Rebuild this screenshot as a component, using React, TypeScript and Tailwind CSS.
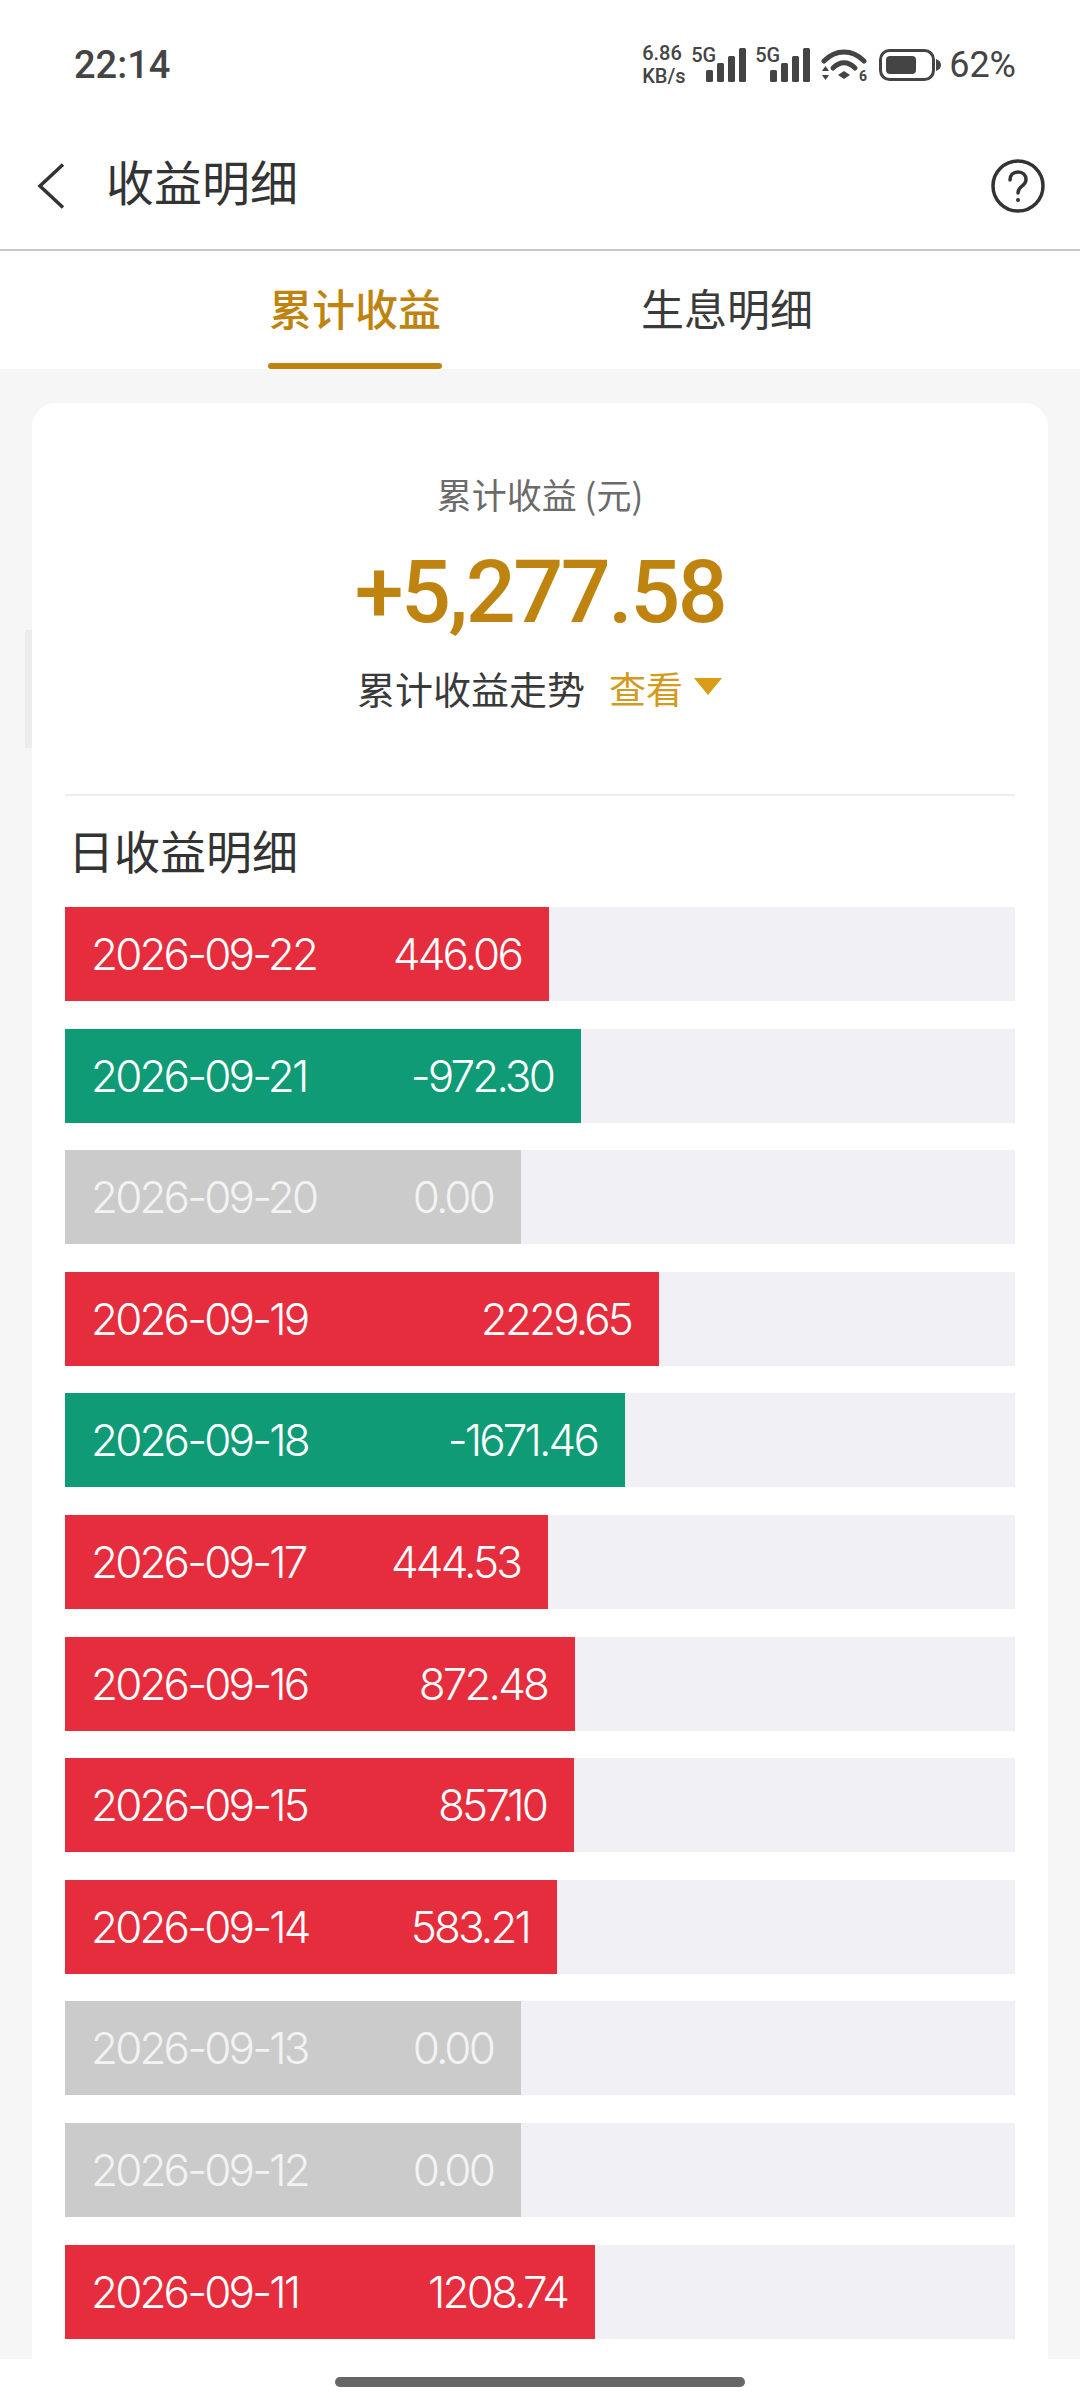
import React from 'react';

const CJK = "font-['Noto_Sans_CJK_SC','Noto_Sans',sans-serif]";

type Row = { date: string; value: string; width: number; color: string; muted?: boolean };

const RED = 'bg-[#e62d3d]';
const GREEN = 'bg-[#0e9b75]';
const GRAY = 'bg-[#cbcbcb]';

const rows: Row[] = [
  { date: '2026-09-22', value: '446.06', width: 484, color: RED },
  { date: '2026-09-21', value: '-972.30', width: 516, color: GREEN },
  { date: '2026-09-20', value: '0.00', width: 456, color: GRAY, muted: true },
  { date: '2026-09-19', value: '2229.65', width: 594, color: RED },
  { date: '2026-09-18', value: '-1671.46', width: 560, color: GREEN },
  { date: '2026-09-17', value: '444.53', width: 483, color: RED },
  { date: '2026-09-16', value: '872.48', width: 510, color: RED },
  { date: '2026-09-15', value: '857.10', width: 509, color: RED },
  { date: '2026-09-14', value: '583.21', width: 492, color: RED },
  { date: '2026-09-13', value: '0.00', width: 456, color: GRAY, muted: true },
  { date: '2026-09-12', value: '0.00', width: 456, color: GRAY, muted: true },
  { date: '2026-09-11', value: '1208.74', width: 530, color: RED },
];

const Signal = () => (
  <svg width="40" height="34" viewBox="0 0 40 34" fill="#444">
    <rect x="0" y="22" width="7" height="12" rx="1.5" />
    <rect x="11" y="15" width="7" height="19" rx="1.5" />
    <rect x="22" y="8" width="7" height="26" rx="1.5" />
    <rect x="33" y="0" width="7" height="34" rx="1.5" />
  </svg>
);

const Wifi = () => (
  <svg width="46" height="34" viewBox="0 0 46 34" fill="none">
    <path d="M3 13C15 1 31 1 43 13" stroke="#444" strokeWidth="5" strokeLinecap="round" />
    <path d="M12 20C19 13 27 13 34 20" stroke="#444" strokeWidth="5" strokeLinecap="round" />
    <path d="M17 27L23 23L29 27L23 31Z" fill="#444" />
    <path d="M1 23L4.500 18L8 23Z" fill="#444" />
    <path d="M1 27L4.500 32L8 27Z" fill="#444" />
  </svg>
);

const Battery = () => (
  <svg width="62" height="32" viewBox="0 0 62 32" fill="none">
    <rect x="1.500" y="1.500" width="53" height="29" rx="9" stroke="#444" strokeWidth="3" />
    <rect x="7" y="7" width="30" height="18" rx="4" fill="#444" />
    <path d="M57 10C60 11 62 13 62 16C62 19 60 21 57 22Z" fill="#444" />
  </svg>
);

const StatusBar = () => (
  <div className="h-[128px] flex items-center justify-between pt-[2px] pl-[74px] pr-[64px] text-[#444]">
    <span className="font-['Roboto',sans-serif] text-[38px] font-medium leading-none">22:14</span>
    <div className="flex items-center font-['Roboto',sans-serif]">
      <div className="w-[49px] flex flex-col text-[20px] font-medium leading-[23px]">
        <span>6.86</span>
        <span>KB/s</span>
      </div>
      <div className="relative w-[55px] h-[34px] flex justify-end">
        <span className="absolute left-0 -top-[3px] text-[20px] font-medium leading-none">5G</span>
        <Signal />
      </div>
      <div className="relative ml-[23px] w-[41px] h-[34px] flex justify-end">
        <span className="absolute -left-[14px] -top-[3px] text-[20px] font-medium leading-none">5G</span>
        <Signal />
      </div>
      <div className="relative ml-[11px] mr-[12px]">
        <Wifi />
        <span className="absolute right-0 -bottom-[1px] text-[14px] font-bold leading-none">6</span>
      </div>
      <Battery />
      <span className="ml-[8px] text-[36px] leading-none">62%</span>
    </div>
  </div>
);

const Header = () => (
  <div className="h-[123px] flex items-center justify-between pb-[6px] pl-[37px] pr-[35px] border-b-2 border-[#c9c9c9]">
    <div className={`flex items-center ${CJK}`}>
      <svg width="28" height="46" viewBox="0 0 28 46" fill="none">
        <path d="M26 1.500L3 23L26 44.500" stroke="#333" strokeWidth="3.500" />
      </svg>
      <span className="ml-[41px] mb-[12px] text-[48px] leading-none text-[#333]">收益明细</span>
    </div>
    <svg width="54" height="54" viewBox="0 0 54 54" fill="none" stroke="#333" strokeWidth="3.500">
      <circle cx="27" cy="27" r="25" />
      <path d="M19 21C19 16 22.500 13 27 13C31.500 13 35 16 35 20.500C35 24 33 25.500 30.500 27.500C28 29.500 27 31 27 34" strokeLinecap="round" />
      <circle cx="27" cy="41" r="2" fill="#333" stroke="none" />
    </svg>
  </div>
);

const Tabs = () => (
  <div className={`h-[118px] flex items-stretch pl-[268px] ${CJK} text-[43px]`}>
    <div className="relative w-[174px] pb-[6px] flex items-center justify-center font-medium text-[#bf8410]">
      累计收益
      <div className="absolute left-0 right-0 bottom-0 h-[6px] rounded-[3px] bg-[#bf8410]" />
    </div>
    <div className="ml-[199px] pb-[6px] flex items-center text-[#3a3a3a]">生息明细</div>
  </div>
);

const Summary = () => (
  <div className="flex flex-col items-center">
    <div className={`mt-[68px] text-[35px] leading-[46px] text-[#6b6b6b] ${CJK}`}>累计收益 (元)</div>
    <div className="mt-[23px] font-['Roboto',sans-serif] text-[88px] font-medium leading-[104px] tracking-[-2.5px] text-[#bf8410]">
      +5,277.58
    </div>
    <div className={`mt-[19px] flex items-center ${CJK}`}>
      <span className="text-[38px] leading-[50px] text-[#3a3a3a]">累计收益走势</span>
      <span className="ml-[24px] text-[37px] leading-[50px] text-[#d29a1e]">查看</span>
      <svg className="ml-[10px] -mt-[4px]" width="30" height="17" viewBox="0 0 30 17" fill="#d99c14">
        <path d="M1 0H29L15 17Z" />
      </svg>
    </div>
  </div>
);

const DayRow = ({ date, value, width, color, muted }: Row) => (
  <div className="h-[94px] bg-[#f1f1f5]">
    <div
      className={`h-full flex items-center justify-between pl-[26px] pr-[28px] text-[44px] font-light tracking-[-0.065em] font-['Inter',sans-serif] ${color} ${muted ? 'text-[#f3f3f3]' : 'text-white'}`}
      style={{ width }}
    >
      <span>{date}</span>
      <span>{value}</span>
    </div>
  </div>
);

export default function App() {
  return (
    <div className="w-[1080px] h-[2403px] overflow-hidden bg-white flex flex-col">
      <StatusBar />
      <Header />
      <Tabs />
      <div className="relative h-[1990px] bg-[#f6f6f6] px-[32px] pt-[34px] flex flex-col">
        <div className="absolute left-[25px] top-[261px] w-[9px] h-[118px] bg-[#ececec]" />
        <div className="relative flex-1 bg-white rounded-t-[24px] px-[33px]">
          <Summary />
          <div className="mt-[81px] h-[2px] bg-[#eeeeee]" />
          <div className={`mt-[22px] pl-[3px] text-[46px] leading-[62px] text-[#333] ${CJK}`}>日收益明细</div>
          <div className="mt-[27px] flex flex-col gap-[27.600px]">
            {rows.map((row) => (
              <DayRow key={row.date} {...row} />
            ))}
          </div>
        </div>
      </div>
      <div className="flex-1 bg-white flex justify-center pt-[18px]">
        <div className="w-[410px] h-[10px] rounded-full bg-[#666]" />
      </div>
    </div>
  );
}
